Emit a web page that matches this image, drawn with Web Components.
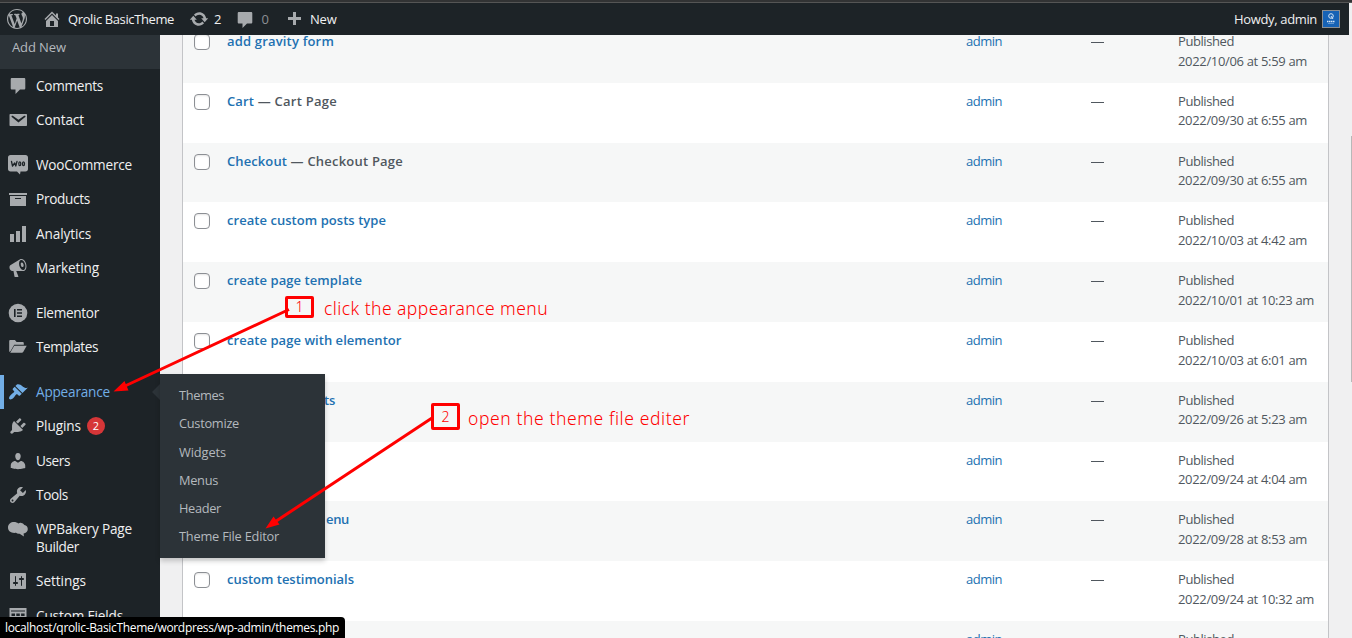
<!DOCTYPE html>
<html lang="en">
<head>
<meta charset="utf-8">
<title>Pages</title>
<style>
html,body{margin:0;height:100%;overflow:hidden;background:#f0f0f1;font-family:"Open Sans","Noto Sans",sans-serif}
</style>
</head>
<body>
<wp-screen></wp-screen>
<script>
const ICONS = {
wp:'<path d="M20 10c0-5.51-4.49-10-10-10C4.48 0 0 4.49 0 10c0 5.52 4.48 10 10 10 5.51 0 10-4.48 10-10zM7.78 15.37L4.37 6.22c.55-.02 1.17-.08 1.17-.08.5-.06.44-1.13-.06-1.11 0 0-1.45.11-2.37.11-.18 0-.37 0-.58-.01C4.12 2.69 6.87 1.11 10 1.11c2.33 0 4.45.87 6.05 2.34-.68-.11-1.65.39-1.65 1.58 0 .74.45 1.36.9 2.1.35.61.55 1.36.55 2.46 0 1.49-1.4 5-1.4 5l-3.03-8.37c.54-.02.82-.17.82-.17.5-.05.44-1.25-.06-1.22 0 0-1.44.12-2.38.12-.87 0-2.33-.12-2.33-.12-.5-.03-.56 1.2-.06 1.22l.92.08 1.26 3.41zM17.41 10c.24-.64.74-1.87.43-4.25.7 1.29 1.05 2.71 1.05 4.25 0 3.29-1.73 6.24-4.4 7.78.97-2.59 1.94-5.2 2.92-7.78zM6.1 18.09C3.12 16.65 1.11 13.53 1.11 10c0-1.3.23-2.48.72-3.59C3.25 10.3 4.67 14.2 6.1 18.09zm4.03-6.63l2.58 6.98c-.86.29-1.76.45-2.71.45-.79 0-1.57-.11-2.29-.33.81-2.38 1.62-4.74 2.42-7.1z"/>',
home:'<path fill-rule="evenodd" d="M16 8.5l1.53 1.53-1.06 1.06L10 4.6l-6.47 6.49-1.06-1.06L10 2.5l4 4v-2h2v4zm-6-2.46l6 5.99V18H4v-5.97zM12 17v-5H8v5h4z"/>',
update:'<path d="M10.2 3.28c3.53 0 6.43 2.61 6.92 6h2.08l-3.5 4-3.5-4h2.32c-.45-1.97-2.21-3.45-4.32-3.45-1.45 0-2.73.71-3.54 1.78L4.95 5.66C6.23 4.2 8.11 3.28 10.2 3.28zm-.4 13.44c-3.52 0-6.43-2.61-6.92-6H.8l3.5-4c1.17 1.33 2.33 2.67 3.5 4H5.48c.45 1.97 2.21 3.45 4.32 3.45 1.45 0 2.73-.71 3.54-1.78l1.71 1.95c-1.28 1.46-3.15 2.38-5.25 2.38z"/>',
comment:'<path d="M4 2h12c.8 0 1.3.5 1.3 1.3v8.9c0 .8-.5 1.3-1.3 1.3h-4L7.500 18v-4.500H4c-.8 0-1.300-.5-1.300-1.300V3.300C2.700 2.500 3.200 2 4 2z"/>',
plus:'<path d="M17 7v3h-5v5H9v-5H4V7h5V2h3v5h5z"/>',
mail:'<path fill-rule="evenodd" d="M2.500 4h15.500c.6 0 1 .4 1 1v10c0 .6-.4 1-1 1H2.500c-.6 0-1-.4-1-1V5c0-.6.4-1 1-1zm7.990 8.600l6.740-5.53c.24-.2.43-.66.13-1.070-.29-.41-.82-.42-1.170-.17l-5.700 3.860L4.800 5.830c-.35-.25-.88-.24-1.170.17-.3.41-.11.870.13 1.070z"/>',
woo:'<path d="M2.500 0h15c1.500 0 2.500 1 2.500 2.500v11.500c0 1.500-1 2.500-2.500 2.500h-5l-.5 3-3-3H2.500C1 16.500 0 15.500 0 14V2.500C0 1 1 0 2.500 0z"/><g fill="none" stroke="#1d2327" stroke-width="1.300" stroke-linejoin="round" stroke-linecap="round"><path d="M3.500 6.500l1 4.500L6.700 8 7.800 11 9 6.300"/><ellipse cx="11.800" cy="8.700" rx="1" ry="1.900"/><ellipse cx="15.500" cy="8.700" rx="1" ry="1.900"/></g>',
archive:'<path fill-rule="evenodd" d="M19 4v2H1V4h18zM2 7h16v10H2V7zm11 3V9H7v1h6z"/>',
chart:'<path d="M18 18V2h-4v16h4zm-6 0V7H8v11h4zm-6 0v-8H2v8h4z"/>',
mega:'<path fill-rule="evenodd" d="M18.15 5.94c.46 1.62.38 3.22-.02 4.48-.42 1.28-1.26 2.18-2.3 2.48-.16.06-.26.06-.4.06-.06.02-.12.02-.18.02-.06.02-.14.02-.22.02h-6.8l2.22 5.5c.02.14-.06.26-.14.34-.08.1-.24.16-.34.16H6.95c-.1 0-.26-.06-.34-.16-.08-.08-.16-.2-.14-.34l-1-5.5H4.25l-.02-.02c-.5.06-1.08-.18-1.54-.62s-.88-1.08-1.06-1.88c-.24-.8-.2-1.56-.02-2.2.18-.62.58-1.08 1.06-1.3l.02-.02 9-5.4c.1-.06.18-.1.24-.16.06-.04.14-.08.24-.12.16-.08.28-.12.5-.18 1.04-.3 2.24.1 3.22.98s1.84 2.24 2.26 3.86zm-2.58 5.98h-.02c.4-.1.74-.34 1.04-.7.58-.7.86-1.76.86-3.04 0-.64-.1-1.3-.28-1.98-.34-1.36-1.02-2.5-1.78-3.24s-1.68-1.1-2.46-.88c-.82.22-1.4.96-1.7 2-.32 1.04-.28 2.36.06 3.72.38 1.36 1 2.5 1.8 3.24.78.74 1.62 1.1 2.48.88z"/><ellipse cx="14.200" cy="6.800" rx="1.400" ry="2.300" transform="rotate(-15 14.200 6.800)"/>',
elementor:'<circle cx="10" cy="10" r="9.300"/><path fill="#1d2327" d="M6 6h1.600v8H6zM9 6h5v1.500H9zM9 9.250h5v1.500H9zM9 12.500h5V14H9z"/>',
folder:'<path d="M1.200 15V4.300c0-.7.5-1.200 1.200-1.200h4.500l1.700 2h6c.7 0 1.200.5 1.200 1.200v1.500H6.200L2.600 14z"/><path d="M2.200 15.800l4-7.100h12.500l-3.500 6.300c-.3.500-.8.8-1.300.8z"/>',
brush:'<path d="M14.48 11.06L7.41 3.99l1.5-1.5c.5-.56 2.3-.47 3.51.32 1.21.8 1.43 1.28 2.91 2.1 1.18.64 2.45 1.26 4.45.85zm-.71.71L6.7 4.7 4.93 6.47c-.39.39-.39 1.02 0 1.41l1.06 1.06c.39.39.39 1.03 0 1.42-.6.6-1.43 1.11-2.21 1.69-.35.26-.7.53-1.01.84C1.43 14.23.4 16.08 1.4 17.07c.99 1 2.84-.03 4.18-1.36.31-.31.58-.66.85-1.02.57-.78 1.08-1.61 1.69-2.21.39-.39 1.02-.39 1.41 0l1.06 1.06c.39.39 1.02.39 1.41 0z"/>',
plug:'<path d="M13.11 4.36L9.87 7.6 8 5.73l3.24-3.24c.35-.34 1.05-.2 1.56.32.52.51.66 1.21.31 1.55zm-8 1.77l.91-1.12 9.01 9.01-1.19.84c-.71.71-2.63 1.16-3.82 1.16H6.14L4.9 17.26c-.59.59-1.54.59-2.12 0-.59-.58-.59-1.53 0-2.12l1.24-1.24v-3.88c0-1.13.4-3.19 1.09-3.89zm7.26 3.97l3.24-3.24c.34-.35 1.04-.21 1.55.31.52.51.66 1.21.31 1.55l-3.24 3.25z"/>',
user:'<path d="M10 9.25c-2.27 0-2.73-3.44-2.73-3.44C7 4.02 7.82 2 9.97 2c2.16 0 2.98 2.02 2.71 3.81 0 0-.41 3.44-2.68 3.44zm0 2.57L12.72 10c2.39 0 4.52 2.33 4.52 4.53v2.49s-3.65 1.13-7.24 1.13c-3.65 0-7.24-1.13-7.24-1.13v-2.49c0-2.25 1.94-4.48 4.47-4.48z"/>',
wrench:'<path fill-rule="evenodd" d="M16.68 9.77c-1.34 1.34-3.3 1.67-4.95.99l-5.41 6.52c-.99.99-2.59.99-3.58 0s-.99-2.59 0-3.57l6.52-5.42c-.68-1.65-.35-3.61.99-4.95 1.28-1.28 3.12-1.62 4.72-1.06l-2.89 2.89 2.82 2.82 2.86-2.87c.53 1.58.18 3.39-1.08 4.65zM3.81 16.21c.4.39 1.04.39 1.43 0 .4-.4.4-1.04 0-1.43-.39-.4-1.03-.4-1.43 0-.39.39-.39 1.03 0 1.43z"/>',
bakery:'<path d="M0 8.500C0 5 2.800 3 6 3c1.800 0 3.200.5 4.200 1.500C11.200 4 12 3.700 13.300 3.900c1.600.2 2.600 1 3.100 2.200 2 .4 3.400 1.800 3.400 4 0 2.300-1.800 4.200-4.200 4.300l.3 3.100-4.300-2.800c-1.500.2-2.700-.1-3.600-.9C3.500 14.500 0 12.200 0 8.500z"/>',
sliders:'<path fill-rule="evenodd" d="M18 17V3c0-.6-.4-1-1-1H3c-.6 0-1 .4-1 1v14c0 .6.4 1 1 1h14c.6 0 1-.4 1-1zM8 11h1c.55 0 1 .45 1 1s-.45 1-1 1H8v1.500c0 .28-.22.5-.5.5s-.5-.22-.5-.5V13H6c-.55 0-1-.45-1-1s.45-1 1-1h1V5.500c0-.28.22-.5.5-.5s.5.22.5.5V11zm5-2h-1c-.55 0-1-.45-1-1s.45-1 1-1h1V5.500c0-.28.22-.5.5-.5s.5.22.5.5V7h1c.55 0 1 .45 1 1s-.45 1-1 1h-1v5.500c0 .28-.22.5-.5.5s-.5-.22-.5-.5V9z"/>',
fields:'<path fill-rule="evenodd" d="M1.500 2h17v15h-17zM3 4.500v1h14v-1zM3.500 7.500v2.500h3.500V7.500zm4.800 0v2.500h3.500V7.500zm4.800 0v2.500h3.500V7.500zM3.500 11.500V14h3.500v-2.500zm4.800 0V14h3.500v-2.500zm4.800 0V14h3.500v-2.500z"/>'
};
class Base extends HTMLElement{
  connectedCallback(){
    if(this.shadowRoot) return;
    this.attachShadow({mode:'open'}).innerHTML=this.view();
  }
}
const fit=(w,t)=>`<fit-text w="${w}">${t}</fit-text>`;

customElements.define('wp-icon',class extends Base{
  view(){return `<style>:host{display:block;width:20px;height:20px;flex:none}svg{display:block;width:20px;height:20px;fill:currentColor;overflow:visible}</style><svg viewBox="0 0 20 20">${ICONS[this.getAttribute('name')]}</svg>`}
});

customElements.define('admin-bar',class extends Base{
  view(){return `<style>
  :host{display:block;box-sizing:border-box;height:35px;width:1349px;border-top:2px solid #323334;font-size:13px;color:#f0f0f1}
  nav{display:flex;align-items:center;height:33px;box-sizing:border-box;border-top:1px solid #555;background:#1d2327;padding:0 9px 0 7px}
  wp-icon{color:#a7aaad}.home{margin:0 6px 0 15px}.upd{margin:0 5px 0 15px}.com{margin:1px 6px 0 14px}.plus{margin:2px 6px 0 15px}
  .dim{color:#8c8f94}.sp{flex:1}
  .av{width:16px;height:16px;border:1px solid #8c8f94;background:#1762b5;margin-left:5px}
  .av svg{display:block}
  </style><nav><wp-icon name="wp"></wp-icon><wp-icon class="home" name="home"></wp-icon>${fit(106,'Qrolic BasicTheme')}
  <wp-icon class="upd" name="update"></wp-icon>${fit(8,'2')}<wp-icon class="com" name="comment"></wp-icon><span class="dim">${fit(8,'0')}</span>
  <wp-icon class="plus" name="plus"></wp-icon>${fit(27,'New')}<span class="sp"></span>${fit(83,'Howdy, admin')}
  <span class="av"><svg width="16" height="16" viewBox="0 0 16 16" fill="none" stroke="#d5e4f5"><circle cx="8" cy="5" r="2.300"/><path d="M8 5l2 3"/><path d="M4 10.500h8" stroke-width="1.500" stroke-dasharray="1.500 .5"/><path d="M5 12.500h6" stroke-width=".4"/></svg></span></nav>`}
});

customElements.define('menu-item',class extends Base{
  view(){const on=this.hasAttribute('active');
  return `<style>
  :host{display:flex;box-sizing:border-box;min-height:34.300px;padding:8px 0 8px 8px;gap:8px;color:${on?'#72aee6':'#f0f0f1'};font-size:13.600px;line-height:18px;position:relative;
    ${on?'box-shadow:inset 4px 0 0 #72aee6':''}}
  wp-icon{color:${on?'#72aee6':'#a7aaad'};margin:-1px 0}
  ${on?':host::after{content:"";position:absolute;right:0;top:9px;border:8px solid transparent;border-left:0;border-right-color:#2c3338}':''}
  </style><wp-icon name="${this.getAttribute('icon')}"></wp-icon><slot></slot>`}
});
customElements.define('count-badge',class extends Base{
  view(){return `<style>:host{display:block;width:18px;height:18px;border-radius:9px;background:#d63638;color:#fff;font-size:11px;line-height:18px;text-align:center;margin-left:-2px}</style><slot></slot>`}
});

customElements.define('admin-menu',class extends Base{
  view(){
  const it=(i,t,w,x='',b='')=>`<menu-item icon="${i}" ${x}>${fit(w,t)}${b}</menu-item>`;
  return `<style>
  :host{display:block;width:160px;height:603px;overflow:hidden;background:#1d2327}
  .sub{box-sizing:border-box;height:34px;background:#2c3338;color:#b4b9be;font-size:13px;line-height:18px;padding:3px 0 0 12px}
  hr{border:0;height:10.600px;margin:0}.two{display:block}
  </style><div class="sub">${fit(54,'Add New')}</div>
  ${it('comment','Comments',67)}${it('mail','Contact',48)}<hr>
  ${it('woo','WooCommerce',96)}${it('archive','Products',54)}${it('chart','Analytics',55)}${it('mega','Marketing',63)}<hr>
  ${it('elementor','Elementor',63)}${it('folder','Templates',62)}<hr>
  ${it('brush','Appearance',74,'active')}${it('plug','Plugins',45,'','<count-badge>2</count-badge>')}${it('user','Users',34)}${it('wrench','Tools',32)}
  <menu-item icon="bakery"><span class="two">${fit(96,'WPBakery Page')}<br>${fit(43,'Builder')}</span></menu-item>
  ${it('sliders','Settings',50)}${it('fields','Custom Fields',87)}`}
});

customElements.define('page-row',class extends Base{
  view(){const a=n=>this.getAttribute(n)||'';
  return `<style>
  :host{display:grid;grid-template-columns:44px 739px 125px 87px 1fr;box-sizing:border-box;height:59.800px;padding-top:9px;font-size:13px;line-height:19.600px;color:#50575e;background:${this.hasAttribute('odd')?'#f6f7f7':'#fff'}}
  i{display:block;box-sizing:border-box;width:16px;height:16px;border:1px solid #8c8f94;border-radius:4px;background:#fff;box-shadow:inset 0 1px 2px rgba(0,0,0,.1);margin:2px 0 0 11px}
  .t{font-size:13px;font-weight:600;white-space:pre}a{color:#2271b1}.t a{margin-left:${a('shift')||0}px}
  .dash{width:13px;height:1px;background:#50575e;margin-top:10px}
  .d fit-text{display:table}
  </style><i></i><div class="t"><a>${a('w')?fit(a('w'),a('title-text')):''}</a>${a('state')?fit(a('sw'),a('state')):''}</div>
  <a>${fit(36,'admin')}</a><div><div class="dash"></div></div><div class="d">${fit(56,'Published')}${fit(a('date').length>21?136:129,a('date'))}</div>`}
});

customElements.define('page-table',class extends Base{
  view(){
  const rows=[['add gravity form',107,'2022/10/06 at 5:59 am'],['Cart',27,'2022/09/30 at 6:55 am',0,' — Cart Page',83],['Checkout',60,'2022/09/30 at 6:55 am',0,' — Checkout Page',116],
  ['create custom posts type',159,'2022/10/03 at 4:42 am'],['create page template',135,'2022/10/01 at 10:23 am'],['create page with elementor',174.500,'2022/10/03 at 6:01 am'],
  ['ts',11,'2022/09/26 at 5:23 am',97],['',0,'2022/09/24 at 4:04 am'],['enu',23,'2022/09/28 at 8:53 am',99],['custom testimonials',127,'2022/09/24 at 10:32 am'],['',0,'2022/09/24 at 10:32 am']];
  return `<style>:host{display:block;width:1145px;margin:-12px 0 0 22px;border-left:1px solid #c3c4c7;border-right:1px solid #c3c4c7}</style>`+
  rows.map((r,k)=>`<page-row ${k%2?'':'odd'} title-text="${r[0]}" w="${r[1]||''}" date="${r[2]}" shift="${r[3]||0}" ${r[4]?`state="${r[4]}" sw="${r[5]}"`:''}></page-row>`).join('')}
});

customElements.define('fly-menu',class extends Base{
  view(){return `<style>:host{position:absolute;left:160px;top:374px;box-sizing:border-box;width:165px;height:184px;padding:7px 0 0 19px;background:#2c3338;box-shadow:0 3px 5px rgba(0,0,0,.2);color:#b4b9be;font-size:12.800px;font-weight:500}
  div{height:28.250px;line-height:28px}</style>${[['Themes',45],['Customize',60],['Widgets',47],['Menus',39],['Header',42],['Theme File Editor',100]].map(m=>`<div>${fit(m[1],m[0])}</div>`).join('')}`}
});

customElements.define('step-note',class extends Base{
  view(){return `<style>:host{position:absolute;display:flex;align-items:center;color:#f00;font-family:"Noto Sans","Open Sans",sans-serif;font-size:17.500px;font-weight:300;line-height:24px}
  b{box-sizing:border-box;width:29px;height:var(--h);border:3px solid #f00;border-radius:2px;font-size:14px;font-weight:300;line-height:calc(var(--h) - 6px);text-align:center;margin-right:var(--g)}
  slot{display:block;padding-top:2px}</style>
  <b>${this.getAttribute('n')}</b><slot></slot>`}
});
customElements.define('arrow-layer',class extends Base{
  view(){return `<style>:host{position:absolute;left:0;top:0;width:1352px;height:638px}svg{display:block}</style>
  <svg width="1352" height="638" stroke="#f00" fill="#f00"><path stroke-width="3" d="M289 309.500L125 386M432 418L274 522.500"/><path stroke="none" d="M113.500 391.500L124.500 381L128.500 390.500ZM265.500 528.500L273.500 516.500L279.500 524.500Z"/></svg>`}
});
customElements.define('status-tip',class extends Base{
  view(){return `<style>:host{position:absolute;left:0;bottom:0;box-sizing:border-box;width:345px;height:21px;padding-left:5px;background:#000;color:#fff;font-size:12px;line-height:21px;border-radius:0 4px 0 0}</style><slot></slot>`}
});

customElements.define('wp-screen',class extends Base{
  view(){return `<style>
  :host{display:block;position:relative;width:1352px;height:638px;overflow:hidden;background:#f0f0f1}
  main{display:flex;height:603px;overflow:hidden}
  .top{display:flex;background:linear-gradient(#323334 2px,#555 2px,#555 3px,#f0f0f1 3px)}
  .thumb{position:absolute;right:0;top:136px;width:1px;height:246px;background:#b8b8b8}
  .n1{left:285px;top:294px;--h:22px;--g:10px}.n2{left:431px;top:403px;--h:27px;--g:8px}
  </style><div class="top"><admin-bar></admin-bar></div>
  <main><admin-menu></admin-menu><page-table></page-table></main><div class="thumb"></div>
  <fly-menu></fly-menu><arrow-layer></arrow-layer>
  <step-note class="n1" n="1">${fit(224,'click the appearance menu')}</step-note>
  <step-note class="n2" n="2">${fit(222,'open the theme file editer')}</step-note>
  <status-tip>${fit(334,'localhost/qrolic-BasicTheme/wordpress/wp-admin/themes.php')}</status-tip>`}
});

/* Adjusts tracking so that a label takes up the width given in "w". */
customElements.define('fit-text',class extends Base{
  view(){return `<style>:host{display:inline-block;white-space:pre}</style><slot></slot>`}
  connectedCallback(){
    super.connectedCallback();
    const w=+this.getAttribute('w'),n=this.textContent.length,nat=this.getBoundingClientRect().width;
    if(n>1&&nat) this.style.letterSpacing=((w-nat)/n).toFixed(3)+'px';
  }
});
</script>
</body>
</html>
